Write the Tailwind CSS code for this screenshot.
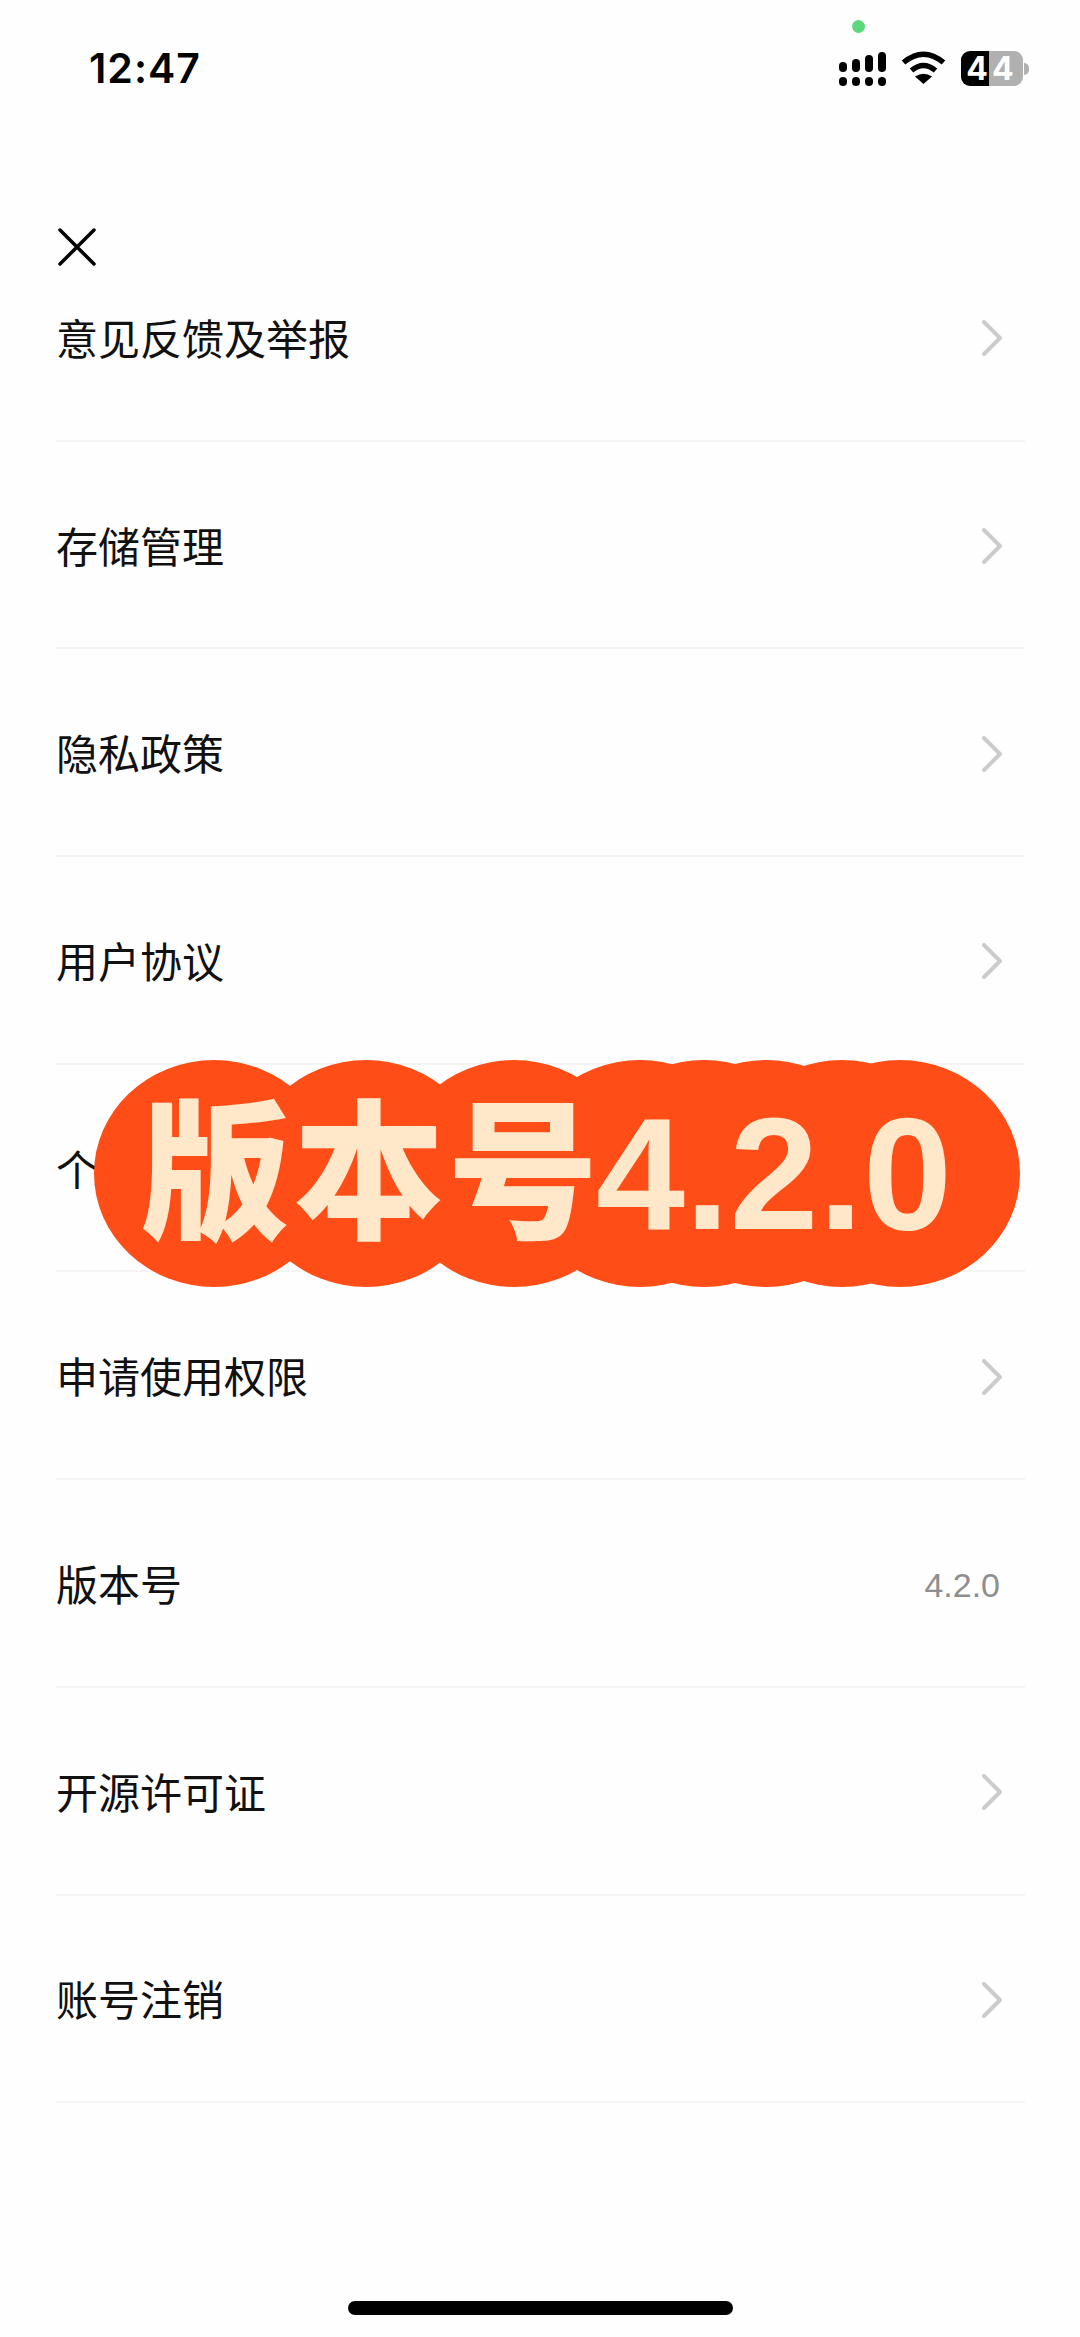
<!DOCTYPE html>
<html lang="zh-CN">
<head>
    <meta charset="UTF-8">
    <meta name="viewport" content="width=device-width, initial-scale=1.0">
    <title>设置</title>
    <script src="https://cdn.jsdelivr.net/npm/@tailwindcss/browser@4"></script>
</head>
<body class="bg-[#fefefe] font-['Noto_Sans_CJK_SC',sans-serif]">
    <div class="relative w-[1080px] h-[2337px] overflow-hidden">
        <!-- Status bar -->
        <div class="h-[234px] pt-[51px] pl-[89px] pr-[51px] flex items-start justify-between">
            <span class="font-['Inter',sans-serif] font-semibold text-[41px] leading-[35px] tracking-[1px] text-black">12:47</span>
            <div class="flex items-start gap-[15px]">
                <svg width="47" height="35" viewBox="0 0 47 35" class="mt-px">
                    <rect x="0" y="10" width="8" height="10" rx="4"/>
                    <rect x="13" y="7" width="8" height="13" rx="4"/>
                    <rect x="26" y="3" width="8" height="17" rx="4"/>
                    <rect x="39" y="0" width="8" height="20" rx="4"/>
                    <rect x="0" y="25" width="8" height="9" rx="4"/>
                    <rect x="13" y="25" width="8" height="9" rx="4"/>
                    <rect x="26" y="25" width="8" height="9" rx="4"/>
                    <rect x="39" y="25" width="8" height="9" rx="4"/>
                </svg>
                <svg width="45" height="33" viewBox="0 0 45 33">
                    <path d="M2.5 11.5 Q22.5 -5 42.5 11.5" fill="none" stroke="black" stroke-width="5.5"/>
                    <path d="M10.5 19.5 Q22.5 9.5 34.5 19.5" fill="none" stroke="black" stroke-width="5.5"/>
                    <path d="M14 25.5 Q22.5 20 31 25.5 L22.5 33 Z"/>
                </svg>
                <div class="flex items-center gap-[1px]">
                    <div class="w-[62px] h-[35px] rounded-[9px] bg-[linear-gradient(90deg,#000_28px,#b0b0b0_28px)] flex items-center justify-center font-['Inter',sans-serif] font-bold text-[32px] leading-none tracking-[4px] text-white">44</div>
                    <div class="w-[5px] h-[12px] rounded-r-full bg-[#b0b0b0]"></div>
                </div>
            </div>
        </div>
        <div class="absolute left-[852px] top-[20px] w-[13px] h-[13px] rounded-full bg-[#5fd67c]"></div>

        <!-- Close -->
        <svg class="absolute left-[57px] top-[227px]" width="40" height="40" viewBox="0 0 40 40">
            <path d="M3 3 L37 37 M37 3 L3 37" fill="none" stroke="#000" stroke-width="3.5" stroke-linecap="round"/>
        </svg>

        <!-- Menu list -->
        <div class="ml-[56px] mr-[55px] flex flex-col text-[42px] leading-none text-[#111]">
            <div class="h-[207.7px] flex items-center justify-between border-b-2 border-[#f4f4f4] pr-[22px]">
                <span>意见反馈及举报</span>
                <svg class="mt-[3px]" width="21" height="36" viewBox="0 0 21 36"><path d="M2 2 L18 18 L2 34" fill="none" stroke="#cccccc" stroke-width="4" stroke-linecap="round" stroke-linejoin="round"/></svg>
            </div>
            <div class="h-[207.7px] flex items-center justify-between border-b-2 border-[#f4f4f4] pr-[22px]">
                <span>存储管理</span>
                <svg class="mt-[3px]" width="21" height="36" viewBox="0 0 21 36"><path d="M2 2 L18 18 L2 34" fill="none" stroke="#cccccc" stroke-width="4" stroke-linecap="round" stroke-linejoin="round"/></svg>
            </div>
            <div class="h-[207.7px] flex items-center justify-between border-b-2 border-[#f4f4f4] pr-[22px]">
                <span>隐私政策</span>
                <svg class="mt-[3px]" width="21" height="36" viewBox="0 0 21 36"><path d="M2 2 L18 18 L2 34" fill="none" stroke="#cccccc" stroke-width="4" stroke-linecap="round" stroke-linejoin="round"/></svg>
            </div>
            <div class="h-[207.7px] flex items-center justify-between border-b-2 border-[#f4f4f4] pr-[22px]">
                <span>用户协议</span>
                <svg class="mt-[3px]" width="21" height="36" viewBox="0 0 21 36"><path d="M2 2 L18 18 L2 34" fill="none" stroke="#cccccc" stroke-width="4" stroke-linecap="round" stroke-linejoin="round"/></svg>
            </div>
            <div class="h-[207.7px] flex items-center justify-between border-b-2 border-[#f4f4f4] pr-[22px]">
                <span>个人信息收集清单</span>
                <svg class="mt-[3px]" width="21" height="36" viewBox="0 0 21 36"><path d="M2 2 L18 18 L2 34" fill="none" stroke="#cccccc" stroke-width="4" stroke-linecap="round" stroke-linejoin="round"/></svg>
            </div>
            <div class="h-[207.7px] flex items-center justify-between border-b-2 border-[#f4f4f4] pr-[22px]">
                <span>申请使用权限</span>
                <svg class="mt-[3px]" width="21" height="36" viewBox="0 0 21 36"><path d="M2 2 L18 18 L2 34" fill="none" stroke="#cccccc" stroke-width="4" stroke-linecap="round" stroke-linejoin="round"/></svg>
            </div>
            <div class="h-[207.7px] flex items-center justify-between border-b-2 border-[#f4f4f4] pr-[25px]">
                <span>版本号</span>
                <span class="mt-[4px] font-['Liberation_Sans',sans-serif] text-[34px] text-[#8e8e8e]">4.2.0</span>
            </div>
            <div class="h-[207.7px] flex items-center justify-between border-b-2 border-[#f4f4f4] pr-[22px]">
                <span>开源许可证</span>
                <svg class="mt-[3px]" width="21" height="36" viewBox="0 0 21 36"><path d="M2 2 L18 18 L2 34" fill="none" stroke="#cccccc" stroke-width="4" stroke-linecap="round" stroke-linejoin="round"/></svg>
            </div>
            <div class="h-[207.7px] flex items-center justify-between border-b-2 border-[#f4f4f4] pr-[22px]">
                <span>账号注销</span>
                <svg class="mt-[3px]" width="21" height="36" viewBox="0 0 21 36"><path d="M2 2 L18 18 L2 34" fill="none" stroke="#cccccc" stroke-width="4" stroke-linecap="round" stroke-linejoin="round"/></svg>
            </div>
        </div>

        <!-- Sticker over the list -->
        <div class="absolute left-[94px] top-[1060px] w-[926px] h-[227px]">
            <svg class="absolute inset-0" width="926" height="227" viewBox="0 0 926 227" fill="#ff4d17">
                <ellipse cx="120" cy="113.5" rx="120" ry="113.5"/>
                <ellipse cx="272" cy="113.5" rx="120" ry="113.5"/>
                <ellipse cx="420" cy="113.5" rx="120" ry="113.5"/>
                <ellipse cx="546" cy="113.5" rx="120" ry="113.5"/>
                <ellipse cx="610" cy="113.5" rx="120" ry="113.5"/>
                <ellipse cx="672" cy="113.5" rx="120" ry="113.5"/>
                <ellipse cx="748" cy="113.5" rx="120" ry="113.5"/>
                <ellipse cx="806" cy="113.5" rx="120" ry="113.5"/>
            </svg>
            <div class="absolute left-[46px] top-[-12px] h-[227px] flex items-center whitespace-nowrap font-black text-[#ffe8c9] leading-none">
                <span class="text-[150px] tracking-[4px]">版本号</span>
                <span class="mt-[24px] -ml-[6px] font-['Liberation_Sans',sans-serif] font-bold text-[160px]">4.2.0</span>
            </div>
        </div>

        <!-- Home indicator -->
        <div class="absolute left-[348px] top-[2301px] w-[385px] h-[14px] rounded-full bg-black"></div>
    </div>
</body>
</html>
